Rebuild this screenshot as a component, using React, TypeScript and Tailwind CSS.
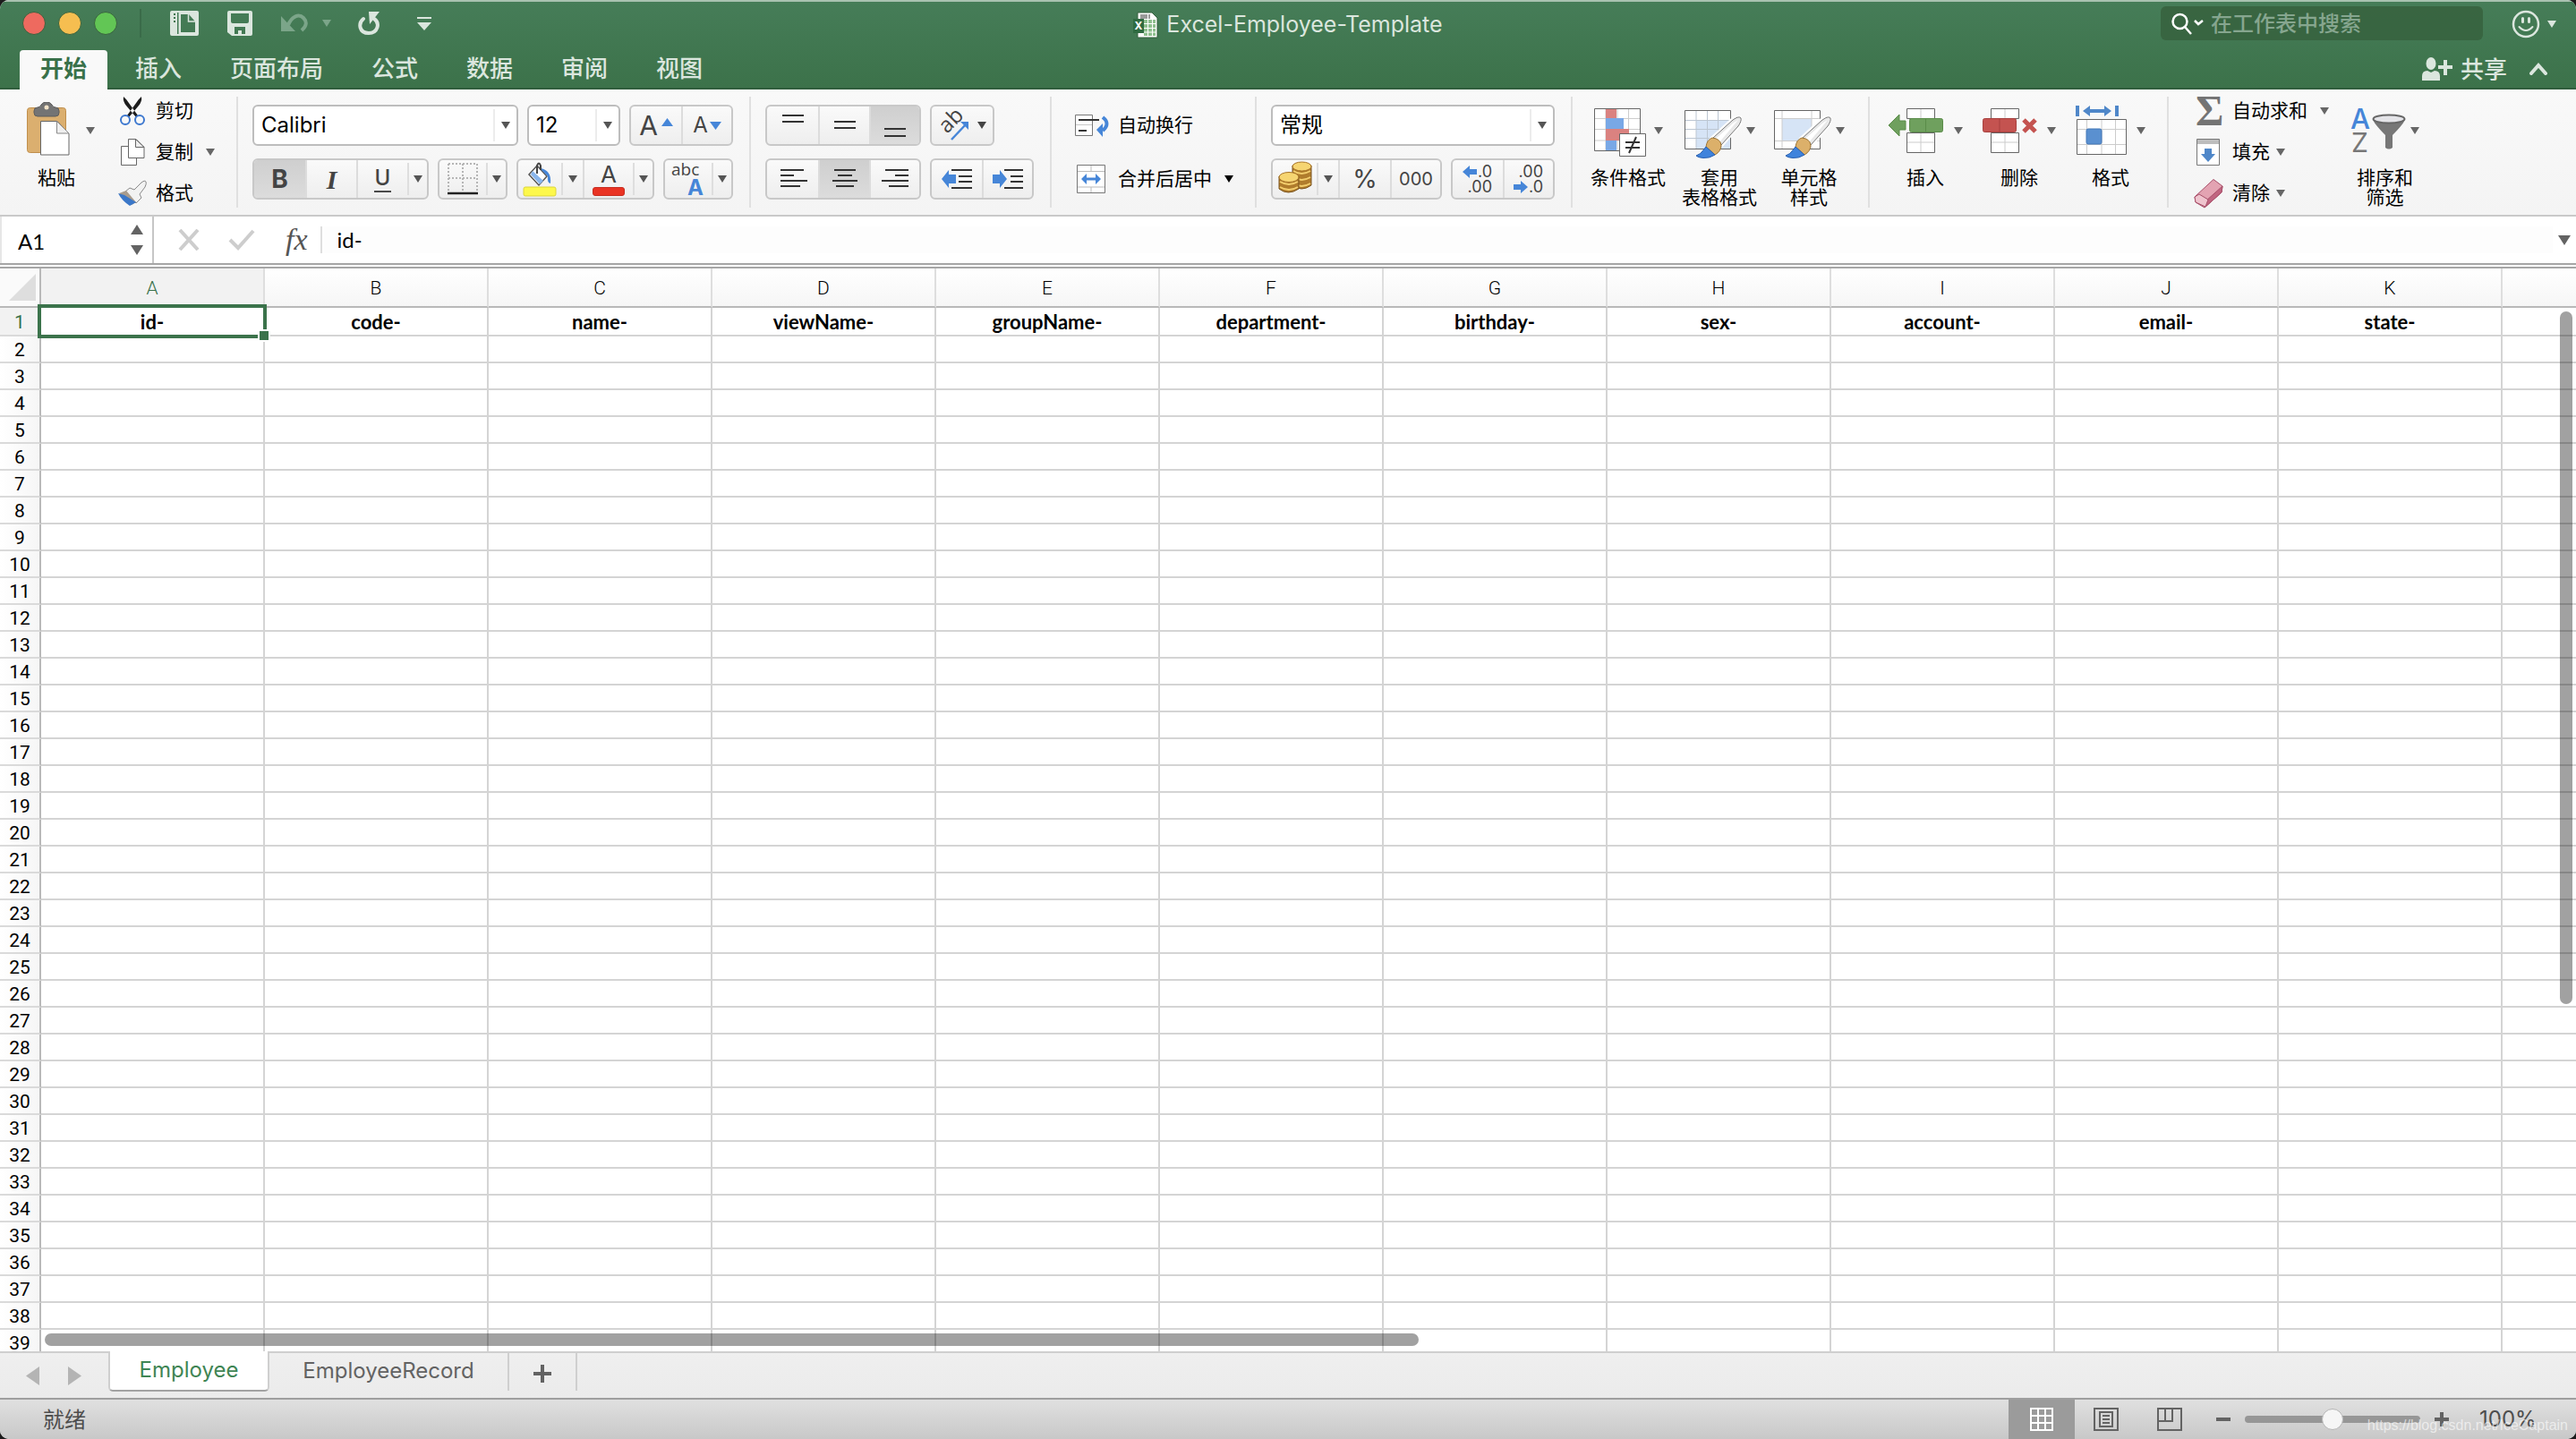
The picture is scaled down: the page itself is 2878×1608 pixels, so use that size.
import { useState, type ReactNode } from "react";
import { clsx } from "clsx";

const ribbonTabs = ["开始", "插入", "页面布局", "公式", "数据", "审阅", "视图"];

const columns = [
  { letter: "A", header: "id-" },
  { letter: "B", header: "code-" },
  { letter: "C", header: "name-" },
  { letter: "D", header: "viewName-" },
  { letter: "E", header: "groupName-" },
  { letter: "F", header: "department-" },
  { letter: "G", header: "birthday-" },
  { letter: "H", header: "sex-" },
  { letter: "I", header: "account-" },
  { letter: "J", header: "email-" },
  { letter: "K", header: "state-" },
];

const rows = Array.from({ length: 38 }, (_, index) => index + 2);

export default function App() {
  return (
    <div className="bg-[#1c1c1c]">
      <div className="flex h-screen w-full flex-col overflow-hidden rounded-[10px] bg-white font-['Inter','Noto_Sans_CJK_SC',sans-serif] text-black">
        <header className="h-[100px] shrink-0 border-t-2 border-b-2 border-t-[#a9c2b0] border-b-[#305e3d] bg-linear-to-b from-[#467d58] to-[#3c724a]">
          <TitleBar />
          <RibbonTabs />
        </header>
        <Ribbon />
        <FormulaBar />
        <Sheet />
        <SheetTabs />
        <StatusBar />
      </div>
    </div>
  );
}

function TitleBar() {
  return (
    <div className="grid h-[54px] grid-cols-[1fr_auto_1fr] text-[#dbe6de]">
      <div className="flex h-12 items-center pl-[25px]">
        <div className="flex gap-[14px]">
          <button type="button" aria-label="关闭" className="size-[26px] rounded-full border border-[#39633f] bg-[#ee6a5f]" />
          <button type="button" aria-label="最小化" className="size-[26px] rounded-full border border-[#39633f] bg-[#f6be50]" />
          <button type="button" aria-label="缩放" className="size-[26px] rounded-full border border-[#39633f] bg-[#62c655]" />
        </div>
        <div className="ml-[25px] h-8 w-[2px] bg-[#3a6b49]" />
        <button type="button" aria-label="模板" className="ml-[32px]">
          <svg width="32" height="28" viewBox="0 0 32 28">
            <path fill="currentColor" fillRule="evenodd" d="M2 0h28a2 2 0 0 1 2 2v24a2 2 0 0 1-2 2H2a2 2 0 0 1-2-2V2a2 2 0 0 1 2-2ZM8 2v24h1.500V2ZM12 4v20h16V12l-7-8Z" />
            <path d="M4 4h2M4 8h2M4 12h2" stroke="#3f7550" strokeWidth="2" />
            <path fill="none" stroke="currentColor" strokeWidth="1.500" d="M20.500 4v8H28" />
          </svg>
        </button>
        <button type="button" aria-label="保存" className="ml-8">
          <svg width="28" height="28" viewBox="0 0 28 28">
            <path fill="currentColor" fillRule="evenodd" d="M2 0h24a2 2 0 0 1 2 2v24a2 2 0 0 1-2 2H5l-5-4V2a2 2 0 0 1 2-2ZM4 3v9q0 2 2 2h16q2 0 2-2V3ZM8 18v8h4v-4h4v4h4v-8Z" />
          </svg>
        </button>
        <button type="button" aria-label="撤销" className="ml-8 text-[#7ba589]">
          <svg width="30" height="22" viewBox="0 0 30 22">
            <path fill="currentColor" d="M0 3v17h16Z" />
            <path fill="none" stroke="currentColor" strokeWidth="4" d="M8 13C12 3 20 0 25 5c4 4 4 9-2 14" />
          </svg>
        </button>
        <Caret className="ml-4 text-[#7ba589]" />
        <button type="button" aria-label="恢复" className="ml-[30px]">
          <svg width="24" height="28" viewBox="0 0 24 28">
            <path fill="none" stroke="currentColor" strokeWidth="4" strokeLinecap="round" d="M6 9C0 14 1 25 12 25c10 0 13-11 6-16" />
            <path fill="currentColor" d="M12 1h12L13 15Z" />
          </svg>
        </button>
        <button type="button" aria-label="自定义工具栏" className="ml-[42px]">
          <svg width="16" height="15" viewBox="0 0 16 15" fill="currentColor">
            <path d="M0 0h16v2H0ZM0 6h16l-8 9Z" />
          </svg>
        </button>
      </div>
      <div className="flex h-[52px] items-center gap-[9px] text-[25px]">
        <svg width="28" height="30" viewBox="0 0 28 30">
          <path fill="#fff" stroke="#35603f" d="M5 1h16l6 6v22H5Z" />
          <path fill="#9a9a9a" d="M8 3h11v5H8Z" />
          <path fill="#8fc08f" d="M12 9h13v18H12Z" />
          <path stroke="#fff" d="M16.500 3v24M21.500 8v19M12 13.500h13M12 18.500h13M12 23h13" />
          <path fill="#2f6b41" d="M0 8h12v16H0Z" />
          <text x="6" y="20" textAnchor="middle" fontSize="12" fontWeight="700" fill="#fff">X</text>
        </svg>
        <h1>Excel-Employee-Template</h1>
      </div>
      <div className="flex items-start justify-end pt-[5px] pr-[22px]">
        <label className="flex h-[38px] w-[360px] items-center rounded-[6px] bg-[#37633f]/90 pl-3">
          <svg width="36" height="26" viewBox="0 0 36 26" fill="none" stroke="#fff" strokeWidth="2.500">
            <circle cx="9.500" cy="11" r="8" />
            <path d="m15 17 7 8M26 10l4 4 5-4" />
          </svg>
          <input
            type="search"
            aria-label="搜索"
            placeholder="在工作表中搜索"
            className="ml-2 w-64 bg-transparent pt-[2px] text-[24px] font-medium text-white outline-none placeholder:text-[#86a68f]"
          />
        </label>
        <button type="button" aria-label="反馈" className="mt-[4px] ml-8 flex items-center gap-2">
          <svg width="32" height="32" viewBox="0 0 32 32" fill="none" stroke="currentColor" strokeWidth="3" strokeLinecap="round">
            <circle cx="16" cy="16" r="14" strokeWidth="2.500" />
            <path d="M12.500 9.500v4M19.500 9.500v4" />
            <path strokeWidth="2" d="M8.500 19q7.500 8 15 0" />
          </svg>
          <Caret />
        </button>
      </div>
    </div>
  );
}

function RibbonTabs() {
  const [active, setActive] = useState("开始");

  return (
    <div className="flex h-[44px] justify-between pr-8 pl-[22px] text-[26px] font-medium text-[#dbe6de]">
      <nav className="flex gap-2">
        {ribbonTabs.map((tab) => (
          <button
            key={tab}
            type="button"
            onClick={() => setActive(tab)}
            className={clsx(
              "h-[44px] rounded-t-[4px] px-[23px] pb-[2px] leading-[42px]",
              tab === active && "bg-[#f9f9f9] font-bold text-[#39714a]"
            )}
          >
            {tab}
          </button>
        ))}
      </nav>
      <div className="flex items-center gap-[25px] pb-[2px]">
        <button type="button" className="flex items-center gap-[9px]">
          <svg width="34" height="26" viewBox="0 0 34 26" fill="currentColor">
            <ellipse cx="10" cy="7" rx="5.500" ry="7" />
            <path d="M0 26v-5q0-6 6-6l4 2 4-2q6 0 6 6v5ZM24 3h4v6h6v4h-6v7h-4v-7h-6V9h6Z" />
          </svg>
          共享
        </button>
        <button type="button" aria-label="折叠功能区">
          <svg width="20" height="14" viewBox="0 0 20 14" fill="none" stroke="currentColor" strokeWidth="4" strokeLinecap="round">
            <path d="m2 12 8-9 8 9" />
          </svg>
        </button>
      </div>
    </div>
  );
}

function Ribbon() {
  return (
    <div className="flex h-[142px] shrink-0 border-b-2 border-[#c9c9c9] bg-linear-to-b from-[#f9f9f9] to-[#f4f4f4] text-[21px]">
      <div className="flex pl-5">
        <BigButton label="粘贴" icon={<PasteIcon />} />
        <div className="ml-[26px] flex w-[132px] flex-col pt-px">
          <SmallButton label="剪切" icon={<CutIcon />} />
          <SmallButton label="复制" icon={<CopyIcon />} caret="ml-[14px]" />
          <SmallButton label="格式" icon={<PainterIcon />} />
        </div>
      </div>
      <Separator />

      <div className="flex flex-col gap-[14px] pt-[17px] pr-[18px] pl-4">
        <div className="flex gap-[10px]">
          <Combo label="字体" value="Calibri" className="w-[297px]" />
          <Combo label="字号" value="12" className="w-[104px]" />
          <ButtonGroup>
            <Segment label="增大字号" className="w-[56px] gap-1">
              <span className="text-[30px]">A</span>
              <svg width="13" height="9" viewBox="0 0 13 9" className="mb-2">
                <path fill="#4686d8" d="m6.500 0 6.500 9H0Z" />
              </svg>
            </Segment>
            <Segment label="减小字号" className="w-[56px] gap-0.5" divided>
              <span className="text-[24px]">A</span>
              <svg width="13" height="9" viewBox="0 0 13 9">
                <path fill="#4686d8" d="m6.500 9 6.500-9H0Z" />
              </svg>
            </Segment>
          </ButtonGroup>
        </div>
        <div className="flex gap-[10px]">
          <ButtonGroup>
            <Segment label="加粗" className="w-[57px] text-[28px] font-bold" pressed>B</Segment>
            <Segment label="倾斜" className="w-[57px] font-['Liberation_Serif',serif] text-[30px] font-bold italic" divided>I</Segment>
            <Segment label="下划线" className="w-[57px]" divided>
              <span className="border-b-2 border-[#4a4a4a] px-px text-[24px] leading-7 font-medium">U</span>
            </Segment>
            <CaretSegment label="下划线选项" />
          </ButtonGroup>
          <ButtonGroup>
            <Segment label="边框" className="w-[52px]">
              <svg width="34" height="36" viewBox="0 0 34 36" fill="none">
                <path stroke="#b5b5b5" strokeWidth="2" strokeDasharray="2 2" d="M1 1h32M1 1v30M33 1v30M17 1v30M1 17h32" />
                <path stroke="#222" strokeWidth="2.500" d="M0 34h34" />
              </svg>
            </Segment>
            <CaretSegment label="边框选项" />
          </ButtonGroup>
          <ButtonGroup>
            <Segment label="填充颜色" className="w-[48px]">
              <svg width="38" height="40" viewBox="0 0 38 40" fill="none">
                <path fill="#fff" stroke="#555" strokeWidth="1.500" d="m16 5 11 12-9 10L7 15Z" />
                <path fill="#8ab6ec" d="m11 11 12 11-4 4L9 15Z" />
                <path fill="#4686d8" d="M19 8c9 1 13 7 12 17q-4-1-3-8Z" />
                <path stroke="#444" strokeWidth="2" d="M16 14V5q2-5 4 0v5" />
                <rect x="1" y="29" width="36" height="10" rx="2" fill="#fdf84b" stroke="#dcd63c" />
              </svg>
            </Segment>
            <CaretSegment label="填充选项" wide />
            <Segment label="字体颜色" className="w-[56px] flex-col" divided>
              <span className="text-[26px] leading-7">A</span>
              <span className="h-[10px] w-[36px] rounded-[3px] border border-[#c72d20] bg-[#e93323]" />
            </Segment>
            <CaretSegment label="字体颜色选项" />
          </ButtonGroup>
          <ButtonGroup>
            <Segment label="拼音指南" className="w-[52px]">
              <svg width="38" height="40" viewBox="0 0 38 40" className="overflow-visible">
                <text x="0" y="16" fontSize="19" fill="#444" fontFamily="Open Sans">abc</text>
                <text x="18" y="38" fontSize="24" fontWeight="700" fill="#4686d8">A</text>
              </svg>
            </Segment>
            <CaretSegment label="拼音选项" />
          </ButtonGroup>
        </div>
      </div>
      <Separator />

      <div className="flex flex-col gap-[14px] pt-[17px] pr-[18px] pl-4">
        <div className="flex gap-[10px]">
          <ButtonGroup>
            <Segment label="顶端对齐" className="w-[57px]"><Lines d="M5 7h24M5 14h24" /></Segment>
            <Segment label="垂直居中" className="w-[57px]" divided><Lines d="M5 14h24M5 21h24" /></Segment>
            <Segment label="底端对齐" className="w-[56px]" pressed divided><Lines d="M5 22h24M5 30h24" /></Segment>
          </ButtonGroup>
          <ButtonGroup>
            <Segment label="方向" className="w-[68px] gap-2">
              <svg width="36" height="34" viewBox="0 0 36 34" className="overflow-visible">
                <text x="10" y="27" fontSize="24" fill="#444" fontFamily="Open Sans" transform="rotate(-45 10 27)">ab</text>
                <path fill="none" stroke="#4686d8" strokeWidth="2.500" d="m15 33 17-18" />
                <path fill="#4686d8" d="M25 13h9v9Z" />
              </svg>
              <Caret />
            </Segment>
          </ButtonGroup>
        </div>
        <div className="flex gap-[10px]">
          <ButtonGroup>
            <Segment label="左对齐" className="w-[57px]"><Lines d="M3 8h26M3 14h15M3 20h30M3 26h22" /></Segment>
            <Segment label="居中" className="w-[57px]" pressed divided><Lines d="M5 8h24M9 14h16M3 20h28M7 26h20" /></Segment>
            <Segment label="右对齐" className="w-[56px]" divided><Lines d="M6 8h26M17 14h15M2 20h30M10 26h22" /></Segment>
          </ButtonGroup>
          <ButtonGroup>
            <Segment label="减少缩进" className="w-[56px]">
              <svg width="36" height="24" viewBox="0 0 36 24">
                <path fill="#4686d8" d="M1 12 9 2v5h8v10H9v5Z" />
                <path stroke="#333" strokeWidth="2" d="M12 2h23M20 9h15M20 15h15M12 22h23" />
              </svg>
            </Segment>
            <Segment label="增加缩进" className="w-[56px]" divided>
              <svg width="36" height="24" viewBox="0 0 36 24">
                <path fill="#4686d8" d="M17 12 9 2v5H1v10h8v5Z" />
                <path stroke="#333" strokeWidth="2" d="M14 2h21M21 9h14M21 15h14M14 22h21" />
              </svg>
            </Segment>
          </ButtonGroup>
        </div>
      </div>
      <Separator />

      <div className="flex flex-col gap-[14px] pt-[17px] pr-[24px] pl-[26px]">
        <button type="button" className="flex h-[46px] items-center gap-2">
          <svg width="40" height="26" viewBox="0 0 40 26" fill="none">
            <path fill="#fff" stroke="#777" d="M.5 1.500h19v23H.5Z" />
            <path stroke="#c8c8c8" d="M1 12.500h18" />
            <path stroke="#333" strokeWidth="2" d="M4 7h23M4 19h9" />
            <path stroke="#4686d8" strokeWidth="4" d="M31 4q9 7 0 15" />
            <path fill="#4686d8" d="M24 18l7-7v15Z" />
          </svg>
          自动换行
        </button>
        <button type="button" className="flex h-[46px] items-center gap-2">
          <svg width="40" height="32" viewBox="0 0 40 32" fill="none">
            <path fill="#fff" stroke="#777" d="M2.500.5h31v31h-31Z" />
            <path stroke="#bbb" d="M3 7.500h30M3 25h30M18 1v6M18 25v6" />
            <path fill="#4686d8" d="m7 16 6-6v4.500h10V10l6 6-6 6v-4.500H13V22Z" />
          </svg>
          合并后居中
          <Caret className="ml-[6px]" />
        </button>
      </div>
      <Separator />

      <div className="flex flex-col gap-[14px] pt-[17px] pr-[18px] pl-4">
        <Combo label="数字格式" value="常规" className="w-[317px]" />
        <div className="flex gap-[10px]">
          <ButtonGroup>
            <Segment label="货币" className="w-[49px]"><CoinsIcon /></Segment>
            <CaretSegment label="货币选项" wide />
            <Segment label="百分比" className="w-[58px] text-[28px]" divided>%</Segment>
            <Segment label="千位分隔" className="w-[56px] text-[20px]" divided>000</Segment>
          </ButtonGroup>
          <ButtonGroup>
            <Segment label="增加小数位" className="w-[56px]">
              <svg width="36" height="34" viewBox="0 0 36 34" fontSize="18" className="overflow-visible">
                <path fill="#4686d8" d="M1 9 9 2v4h8v6H9v4Z" />
                <text x="34" y="15" textAnchor="end" fill="#444">.0</text>
                <text x="34" y="32" textAnchor="end" fill="#444">.00</text>
              </svg>
            </Segment>
            <Segment label="减少小数位" className="w-[56px]" divided>
              <svg width="36" height="34" viewBox="0 0 36 34" fontSize="18" className="overflow-visible">
                <text x="34" y="15" textAnchor="end" fill="#444">.00</text>
                <path fill="#4686d8" d="m17 26-8-7v4H1v6h8v4Z" />
                <text x="34" y="32" textAnchor="end" fill="#444">.0</text>
              </svg>
            </Segment>
          </ButtonGroup>
        </div>
      </div>
      <Separator />

      <div className="flex gap-[18px] pr-[26px] pl-5">
        <BigButton label="条件格式" icon={<ConditionalIcon />} />
        <BigButton label={"套用\n表格格式"} icon={<TableStyleIcon />} />
        <BigButton label={"单元格\n样式"} icon={<CellStyleIcon />} />
      </div>
      <Separator />

      <div className="flex gap-[22px] pr-[24px] pl-5">
        <BigButton label="插入" icon={<InsertIcon />} />
        <BigButton label="删除" icon={<DeleteIcon />} />
        <BigButton label="格式" icon={<FormatIcon />} />
      </div>
      <Separator />

      <div className="flex gap-6 pl-7">
        <div className="flex flex-col pt-px">
          <SmallButton label="自动求和" icon={<SumIcon />} caret="ml-[14px]" />
          <SmallButton label="填充" icon={<FillDownIcon />} caret="ml-[7px]" />
          <SmallButton label="清除" icon={<EraserIcon />} caret="ml-[7px]" />
        </div>
        <BigButton label={"排序和\n筛选"} icon={<SortIcon />} />
      </div>
    </div>
  );
}

function Separator() {
  return <div className="my-2 w-[2px] shrink-0 bg-[#e0e0e0]" />;
}

function Caret({ className }: { className?: string }) {
  return (
    <svg width="10" height="8" viewBox="0 0 10 8" className={clsx("shrink-0", className)} aria-hidden="true">
      <path fill="currentColor" d="M0 0h10L5 8Z" />
    </svg>
  );
}

function BigButton({ label, icon }: { label: string; icon: ReactNode }) {
  return (
    <button type="button" className="flex flex-col items-center pt-[14px]">
      <span className="flex h-16 items-center gap-[5px] text-[#666]">
        {icon}
        <Caret />
      </span>
      <span className="mt-[10px] leading-[22px] whitespace-pre">{label}</span>
    </button>
  );
}

function SmallButton({ label, icon, caret }: { label: string; icon: ReactNode; caret?: string }) {
  return (
    <button type="button" className="flex h-[46px] items-center">
      {icon}
      <span className="ml-[10px]">{label}</span>
      {caret ? <Caret className={clsx("text-[#666]", caret)} /> : null}
    </button>
  );
}

function Combo({ label, value, className }: { label: string; value: string; className: string }) {
  return (
    <div className={clsx("flex h-[46px] items-center rounded-[6px] border-2 border-[#bdbdbd] bg-white", className)}>
      <select aria-label={label} className="h-full min-w-0 flex-1 appearance-none bg-transparent pl-2 text-[24px] outline-none">
        <option>{value}</option>
      </select>
      <span className="flex h-9 w-[26px] shrink-0 items-center justify-center border-l-2 border-[#ececec] text-[#555]">
        <Caret />
      </span>
    </div>
  );
}

function ButtonGroup({ children }: { children: ReactNode }) {
  return (
    <div className="flex h-[46px] overflow-hidden rounded-[6px] border-2 border-[#c8c8c8] bg-linear-to-b from-[#fafafa] to-[#eeeeee]">
      {children}
    </div>
  );
}

function Segment({
  label,
  className,
  pressed,
  divided,
  children,
}: {
  label: string;
  className: string;
  pressed?: boolean;
  divided?: boolean;
  children: ReactNode;
}) {
  return (
    <button
      type="button"
      aria-label={label}
      aria-pressed={pressed}
      className={clsx(
        "flex items-center justify-center text-[#444]",
        divided && "border-l-2 border-[#dcdcdc]",
        pressed && "bg-linear-to-b from-[#cfcfcf] to-[#dcdcdc]",
        className
      )}
    >
      {children}
    </button>
  );
}

function CaretSegment({ label, wide }: { label: string; wide?: boolean }) {
  return (
    <button
      type="button"
      aria-label={label}
      className={clsx("my-[3px] flex items-center justify-center border-l-2 border-[#dedede] text-[#555]", wide ? "w-[24px]" : "w-[22px]")}
    >
      <Caret />
    </button>
  );
}

function Lines({ d }: { d: string }) {
  return (
    <svg width="34" height="36" viewBox="0 0 34 36">
      <path stroke="#333" strokeWidth="2" d={d} />
    </svg>
  );
}

function PasteIcon() {
  return (
    <svg width="71" height="64" viewBox="0 0 71 64">
      <rect x="10.500" y="6.500" width="43" height="50" rx="3" fill="#dbaf6f" stroke="#c08f4d" />
      <path fill="#747474" stroke="#5d5d5d" d="M22 6q3 0 4-3 2-3 6-3t6 3q1 3 4 3 4 0 4 4v2q0 4-4 4H22q-4 0-4-4v-2q0-4 4-4Z" />
      <circle cx="32" cy="6" r="2.500" fill="#f3e3c8" />
      <path fill="#fff" stroke="#666" d="M25.500 21.500H44l13 14v23.500H25.500Z" />
      <path fill="#eee" stroke="#888" d="M43.500 21.500V35H57Z" />
    </svg>
  );
}

function CutIcon() {
  return (
    <svg width="32" height="32" viewBox="0 0 32 32" fill="none">
      <path fill="#1d1d1d" d="M6 0q-1 5 3 10l11 13 2-2L9 3ZM26 0q1 5-3 10L12 23l-2-2L23 3Z" />
      <circle cx="8" cy="26" r="5" stroke="#3d78cf" strokeWidth="2" />
      <circle cx="24" cy="26" r="5" stroke="#3d78cf" strokeWidth="2" />
    </svg>
  );
}

function CopyIcon() {
  return (
    <svg width="32" height="32" viewBox="0 0 32 32" fill="#fff" stroke="#666">
      <path d="M3.500 9.500h17v21h-17Z" />
      <path d="M11.500 1.500H20l9 9v12H11.500Z" />
      <path fill="#eee" d="M19.500 1.500v9H29Z" />
    </svg>
  );
}

function PainterIcon() {
  return (
    <svg width="32" height="32" viewBox="0 0 32 32">
      <path fill="#f2f2f2" stroke="#888" d="m18 12 8-8q4-3 5-1t-1 6l-6 8 2 4-6 6-12-13 5-4Z" />
      <path fill="#a99c8d" d="m9 13 11 13-5 3L1 16Z" />
      <path fill="#3b77c8" d="m0 16 7 2 13 8-7 4Q4 24 0 16Z" />
    </svg>
  );
}

function CoinsIcon() {
  return (
    <svg width="38" height="46" viewBox="0 0 38 46">
      <path fill="#b07c2c" stroke="#7a5520" d="M16 8v22q10 8 21 0V8Z" />
      <path fill="none" stroke="#f3ce6e" strokeWidth="2" d="M17 14q9 6 19 0M17 21q9 6 19 0M17 28q9 6 19 0" />
      <ellipse cx="26.500" cy="9" rx="10.500" ry="5" fill="#f6d572" stroke="#a87428" />
      <path fill="#b07c2c" stroke="#7a5520" d="M1 20v14q10 8 22 0V20Z" />
      <path fill="none" stroke="#f3ce6e" strokeWidth="2" d="M2 26q10 6 20 0M2 32q10 6 20 0" />
      <ellipse cx="12" cy="21" rx="11" ry="5.500" fill="#f6d572" stroke="#a87428" />
    </svg>
  );
}

function ConditionalIcon() {
  return (
    <svg width="62" height="64" viewBox="0 0 62 64" fill="none">
      <path fill="#fff" d="M.5 7.500h51v47H.5Z" />
      <path stroke="#ccc" d="M13 7v48M26 7v48M38.500 7v48M0 18.500h52M0 30.500h52M0 43h52" />
      <path fill="#da8280" d="M13 8h12v10H13ZM13 30h26v13H13Z" />
      <path fill="#79a8e6" d="M13 18h20v12H13ZM13 43h12v11H13Z" />
      <path stroke="#666" d="M.5 7.500h51v47H.5Z" />
      <path fill="#fff" stroke="#666" d="M28.500 35.500h29v25h-29Z" />
      <path stroke="#333" strokeWidth="2" d="M35 45h16M35 51h16M47 39l-8 18" />
    </svg>
  );
}

function Brush() {
  return (
    <>
      <path fill="none" stroke="#fff" strokeWidth="4" d="m30 42 25-23q7-4 10-1 0 4-4 9L42 49" />
      <path fill="#e9e9e9" stroke="#777" d="m33 40 22-20q7-5 9-2 1 3-3 9L42 48Z" />
      <path fill="#fff" d="m36 41 20-18 5-3-21 25Z" />
      <path fill="#dcb06a" stroke="#9c7434" d="M25 50q1-8 7-10 9 1 10 8 0 7-7 11Z" />
      <path fill="#3f83dc" stroke="#2b61b0" d="m25 50 10 9q-6 4-13 3.500-6-.5-8-2.500 5-2 7-5Z" />
    </>
  );
}

function TableStyleIcon() {
  return (
    <svg width="65" height="64" viewBox="0 0 65 64" fill="none">
      <path fill="#fff" d="M1.500 9.500h51v43h-51Z" />
      <path fill="#d6e4f6" d="M14 20h38v32H14Z" />
      <path stroke="#bcc6d2" d="M14 9v44M26.500 9v44M38.500 9v44M1 20.500h52M1 30.500h52M1 40.500h52" />
      <path stroke="#666" d="M1.500 9.500h51v43h-51Z" />
      <Brush />
    </svg>
  );
}

function CellStyleIcon() {
  return (
    <svg width="65" height="64" viewBox="0 0 65 64" fill="none">
      <path fill="#fff" d="M1.500 9.500h51v43h-51Z" />
      <path fill="#d6e4f6" d="M10 18h33v25H10Z" />
      <path stroke="#ccc" d="M10 9v44M43 9v44M1 18.500h52M1 43.500h52" />
      <path stroke="#666" d="M1.500 9.500h51v43h-51Z" />
      <Brush />
    </svg>
  );
}

function InsertIcon() {
  return (
    <svg width="69" height="64" viewBox="0 0 69 64">
      <path fill="#fff" stroke="#666" d="M21.500 7.500h31v11h-31ZM21.500 34.500h31v22h-31Z" />
      <path stroke="#ccc" d="M37 8v10M37 35v21M22 45h30" />
      <rect x="24.500" y="18.500" width="37" height="15" rx="2" fill="#6fa05e" stroke="#5a8c49" />
      <path fill="#6fa05e" stroke="#5a8c49" d="M1 26 13 14v7h7v10h-7v7ZM42.500 19v14" />
    </svg>
  );
}

function DeleteIcon() {
  return (
    <svg width="67" height="64" viewBox="0 0 67 64">
      <path fill="#fff" stroke="#666" d="M9.500 7.500h31v11h-31ZM9.500 34.500h31v22h-31Z" />
      <path stroke="#ccc" d="M25 8v10M25 35v21M10 45h30" />
      <rect x=".5" y="18.500" width="37" height="15" rx="2" fill="#c45350" stroke="#a8403e" />
      <path stroke="#a8403e" d="M19 19v14" />
      <path stroke="#c45350" strokeWidth="5" d="m46 20 13 13M59 20 46 33" />
    </svg>
  );
}

function FormatIcon() {
  return (
    <svg width="63" height="64" viewBox="0 0 63 64">
      <path fill="#4f87c9" d="M0 4h4v12H0ZM44 4h4v12h-4ZM8 10l8-6v4h16V4l8 6-8 6v-4H16v4Z" />
      <path fill="#fff" d="M1 19h56v40H1Z" />
      <path stroke="#ccc" d="M12.500 19v40M29 19v40M44.500 19v40M1 30.500h56M1 47.500h56" />
      <path fill="none" stroke="#666" d="M1.500 19.500h55v39h-55Z" />
      <rect x="12" y="30" width="17" height="17" rx="2" fill="#5a90d0" stroke="#4478b8" />
    </svg>
  );
}

function SumIcon() {
  return (
    <svg width="33" height="36" viewBox="0 0 33 36" className="overflow-visible">
      <text x="2" y="34" fontSize="48" fontWeight="700" fontFamily="Liberation Serif" fill="#747474">Σ</text>
    </svg>
  );
}

function FillDownIcon() {
  return (
    <svg width="33" height="32" viewBox="0 0 33 32">
      <path fill="#fff" stroke="#777" d="M3.500 1.500h25v29h-25Z" />
      <path fill="#bdbdbd" d="M4 2h24v5H4Z" />
      <path fill="#4f87c9" d="M12 12h8v6h4l-8 9-8-9h4Z" />
    </svg>
  );
}

function EraserIcon() {
  return (
    <svg width="33" height="34" viewBox="0 0 33 34" stroke="#a8506a" strokeLinejoin="round">
      <path fill="#e3a3b2" d="M22 1.500 32 9l-1 7-19 17-10-6-1-6Z" />
      <path fill="#c06580" d="M32 9 13 26l-1 7 19-17Z" />
      <path fill="#efc4ce" d="m1 21 5-3 10 6-3 8-11-5Z" />
    </svg>
  );
}

function SortIcon() {
  return (
    <svg width="62" height="64" viewBox="0 0 62 64">
      <text x="0" y="30" fontSize="31" fontWeight="500" fill="#4686d8">A</text>
      <text x="1" y="56" fontSize="30" fill="#777">Z</text>
      <path fill="#777" d="M25 19q1 5 14 18v14q4 3 8 0V37q13-13 14-18Z" />
      <ellipse cx="43" cy="19" rx="17.500" ry="4.500" fill="#e4e4e8" stroke="#666" strokeWidth="2" />
    </svg>
  );
}

function FormulaBar() {
  return (
    <div className="flex h-[58px] shrink-0 items-stretch border-b-[6px] border-double border-[#a6a6a6] bg-white text-[24px]">
      <div className="flex w-[172px] items-center justify-between border-2 border-y-0 border-l-[#e6e6e6] border-r-[#c6c6c6] pr-[10px] pl-[18px]">
        <input aria-label="名称框" defaultValue="A1" className="w-20 bg-transparent pt-1 font-['Lato',sans-serif] outline-none" />
        <svg width="14" height="34" viewBox="0 0 14 34" fill="#636363">
          <path d="m7 0 7 11H0ZM0 23h14L7 34Z" />
        </svg>
      </div>
      <div className="flex items-center pl-[27px] text-[#cdcdcd]">
        <button type="button" aria-label="取消">
          <svg width="24" height="24" viewBox="0 0 24 24" fill="none" stroke="currentColor" strokeWidth="4">
            <path d="m2 1 20 22M22 1 2 23" />
          </svg>
        </button>
        <button type="button" aria-label="输入" className="ml-8">
          <svg width="30" height="24" viewBox="0 0 30 24" fill="none" stroke="currentColor" strokeWidth="4">
            <path d="m2 12 9 9L28 2" />
          </svg>
        </button>
        <button type="button" aria-label="插入函数" className="ml-[34px] font-['Liberation_Serif',serif] text-[34px] leading-10 text-[#555] italic">
          fx
        </button>
      </div>
      <input
        aria-label="编辑栏"
        defaultValue="id-"
        className="my-[11px] ml-[14px] min-w-0 flex-1 border-l-2 border-[#dedede] bg-[#fdfdfd] pl-[17px] font-['Lato',sans-serif] outline-none"
      />
      <button type="button" aria-label="展开编辑栏" className="px-[6px] text-[#636363]">
        <svg width="14" height="11" viewBox="0 0 14 11">
          <path fill="currentColor" d="M0 0h14L7 11Z" />
        </svg>
      </button>
    </div>
  );
}

function Sheet() {
  return (
    <main className="relative min-h-0 flex-1 overflow-hidden">
      <table className="w-full table-fixed border-separate border-spacing-0">
        <colgroup>
          <col className="w-[46px]" />
          {columns.map((column) => (
            <col key={column.letter} className="w-[250px]" />
          ))}
          <col />
        </colgroup>
        <thead className="font-['Roboto',sans-serif] text-[21px] leading-7">
          <tr>
            <th className="h-[44px] border-r-2 border-b-2 border-[#b9b9b9] bg-[#fafafa] p-0">
              <svg width="32" height="30" viewBox="0 0 32 30" className="ml-[9px]">
                <path fill="#dedede" d="M31 0v30H1Z" />
              </svg>
            </th>
            {columns.map(({ letter }) => (
              <th
                key={letter}
                scope="col"
                className={clsx(
                  "border-r-2 border-b-2 border-r-[#dedede] border-b-[#b9b9b9] p-0 pt-[2px] font-light",
                  letter === "A" ? "bg-[#f2f2f2] text-[#39714a]" : "bg-linear-to-b from-white to-[#f6f6f6]"
                )}
              >
                {letter}
              </th>
            ))}
            <th className="border-b-2 border-[#b9b9b9] bg-linear-to-b from-white to-[#f6f6f6] p-0" />
          </tr>
        </thead>
        <tbody>
          <tr>
            <RowHeader row={1} active />
            {columns.map(({ letter, header }) => (
              <td
                key={letter}
                className="relative h-[32px] border-r-2 border-b-2 border-[#d4d4d4] p-0 pt-[2px] text-center font-['Lato',sans-serif] text-[22px] leading-7 font-bold"
              >
                {header}
                {letter === "A" ? (
                  <span className="pointer-events-none absolute -inset-1 z-10 border-4 border-[#3b734b]">
                    <span className="absolute -right-2 -bottom-2 size-[14px] border-2 border-white bg-[#3b734b]" />
                  </span>
                ) : null}
              </td>
            ))}
            <td className="border-b-2 border-[#d4d4d4] p-0" />
          </tr>
          {rows.map((row) => (
            <tr key={row}>
              <RowHeader row={row} />
              {columns.map(({ letter }) => (
                <td key={letter} className="border-r-2 border-b-2 border-[#d4d4d4] p-0" />
              ))}
              <td className="border-b-2 border-[#d4d4d4] p-0" />
            </tr>
          ))}
        </tbody>
      </table>
      {/* overlay scroll bars */}
      <div className="absolute bottom-[6px] left-[50px] h-[14px] w-8/15 rounded-full bg-black/37" />
      <div className="absolute top-[48px] right-[4px] h-[64%] w-[14px] rounded-full bg-black/37" />
    </main>
  );
}

function RowHeader({ row, active }: { row: number; active?: boolean }) {
  return (
    <th
      scope="row"
      className={clsx(
        "border-r-2 border-b-2 border-r-[#b9b9b9] border-b-[#dadada] p-0 pt-[2px] font-['Roboto',sans-serif] text-[21px] leading-[26px] font-normal",
        active ? "bg-[#f2f2f2] text-[#39714a]" : "bg-linear-to-r from-white to-[#f6f6f6]"
      )}
    >
      {row}
    </th>
  );
}

function SheetTabs() {
  return (
    <div className="flex h-[52px] shrink-0 items-start bg-linear-to-b from-[#efefef] to-[#ebebeb] text-[24px]">
      <div className="flex h-full w-[121px] items-center gap-8 border-t-2 border-[#cfcfcf] pl-[29px] text-[#b4b4b4]">
        <button type="button" aria-label="上一个工作表">
          <svg width="15" height="21" viewBox="0 0 15 21"><path fill="currentColor" d="M15 0v21L0 10.500Z" /></svg>
        </button>
        <button type="button" aria-label="下一个工作表">
          <svg width="15" height="21" viewBox="0 0 15 21"><path fill="currentColor" d="M0 0v21l15-10.500Z" /></svg>
        </button>
      </div>
      <button type="button" className="h-[45px] w-[180px] rounded-b-[5px] border-2 border-t-0 border-[#cfcfcf] border-b-[#a2a2a2] bg-white pb-[2px] text-[#3f8554]">
        Employee
      </button>
      <div className="flex h-full flex-1 items-start border-t-2 border-[#cfcfcf] text-[#636363]">
        <button type="button" className="h-[42px] w-[268px] border-r-2 border-[#cfcfcf] pb-[2px]">EmployeeRecord</button>
        <button type="button" aria-label="新建工作表" className="flex h-[42px] w-[76px] items-center justify-center border-r-2 border-[#cfcfcf] pt-[4px]">
          <svg width="20" height="20" viewBox="0 0 20 20"><path stroke="currentColor" strokeWidth="4" d="M10 0v20M0 10h20" /></svg>
        </button>
      </div>
    </div>
  );
}

function StatusBar() {
  const [zoom, setZoom] = useState(100);

  return (
    <footer className="relative flex h-[46px] shrink-0 items-center border-t-2 border-[#9f9f9f] bg-linear-to-b from-[#e0e0e0] to-[#c8c8c8] text-[24px] text-[#4d4d4d]">
      <span className="pt-[2px] pl-12">就绪</span>
      <div className="ml-auto flex h-full text-[#636363]">
        <button type="button" aria-label="普通视图" className="flex w-[74px] items-center justify-center bg-[#9b9b9b] text-white">
          <svg width="26" height="26" viewBox="0 0 26 26" fill="none" stroke="currentColor" strokeWidth="2">
            <path d="M1 1h24v24H1ZM9 1v24M17 1v24M1 9h24M1 17h24" />
          </svg>
        </button>
        <button type="button" aria-label="页面布局视图" className="flex w-[70px] items-center justify-center">
          <svg width="28" height="26" viewBox="0 0 28 26" fill="none" stroke="currentColor" strokeWidth="2">
            <path d="M1 1h26v24H1ZM7 5h14v16H7ZM10 9h8M10 13h8M10 17h8" />
          </svg>
        </button>
        <button type="button" aria-label="分页预览" className="flex w-[72px] items-center justify-center">
          <svg width="28" height="26" viewBox="0 0 28 26" fill="none" stroke="currentColor" strokeWidth="2">
            <path d="M1 1h26v24H1ZM9 1v14M17 1v14H1" />
          </svg>
        </button>
      </div>
      <button type="button" aria-label="缩小" className="ml-4 h-4 w-4 text-[#636363]" onClick={() => setZoom(zoom - 10)}>
        <svg width="16" height="16" viewBox="0 0 16 16"><path stroke="currentColor" strokeWidth="4" d="M0 8h16" /></svg>
      </button>
      <input
        type="range"
        aria-label="缩放比例"
        min={10}
        max={190}
        value={zoom}
        onChange={(event) => setZoom(Number(event.target.value))}
        className="ml-4 h-[8px] w-[196px] appearance-none rounded-full bg-[#969696] [&::-webkit-slider-thumb]:size-[24px] [&::-webkit-slider-thumb]:appearance-none [&::-webkit-slider-thumb]:rounded-full [&::-webkit-slider-thumb]:border [&::-webkit-slider-thumb]:border-[#b5b5b5] [&::-webkit-slider-thumb]:bg-[#f6f6f6]"
      />
      <button type="button" aria-label="放大" className="ml-4 h-4 w-4 text-[#636363]" onClick={() => setZoom(zoom + 10)}>
        <svg width="16" height="16" viewBox="0 0 16 16"><path stroke="currentColor" strokeWidth="4" d="M0 8h16M8 0v16" /></svg>
      </button>
      <output className="w-[142px] pl-[34px]">{zoom}%</output>
      <span className="pointer-events-none absolute right-[9px] bottom-[3px] font-['Liberation_Sans',sans-serif] text-[16px] text-white/60">
        https://blog.csdn.net/IceCaptain
      </span>
    </footer>
  );
}
